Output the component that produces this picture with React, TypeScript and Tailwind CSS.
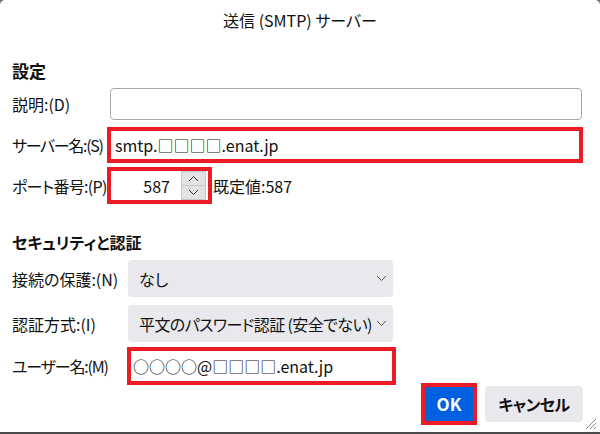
import React from 'react';

const font = "font-['Noto_Sans_CJK_JP',sans-serif] [font-feature-settings:'palt']";

const Chevron: React.FC<{ up?: boolean; className?: string; color?: string }> = ({ up, className, color }) => (
  <svg width="11" height="7" viewBox="0 0 11 7" className={className}>
    <path
      d={up ? 'M1 6L5.5 1.5L10 6' : 'M1 1L5.5 5.5L10 1'}
      fill="none"
      stroke={color ?? '#444'}
      strokeWidth="1"
    />
  </svg>
);

const Select: React.FC<{ value: string; tight?: boolean }> = ({ value, tight }) => (
  <div className="w-[265px] h-[37px] bg-[#e9e9ed] rounded-[4px] flex items-center pl-[11px] pr-[6px]">
    <span className={`flex-1 whitespace-nowrap overflow-hidden ${tight ? 'tracking-[-0.6px]' : ''}`}>{value}</span>
    <Chevron className="shrink-0" color="#555" />
  </div>
);

const Label: React.FC<{ w: string; tight?: string; children: React.ReactNode }> = ({ w, tight, children }) => (
  <span className={`${w} ${tight ?? ''} shrink-0 whitespace-nowrap`}>{children}</span>
);

const App: React.FC = () => {
  return (
    <div className="w-[600px] h-[434px] bg-[#6e6e6e]">
      <div
        className={`${font} w-[600px] h-[434px] bg-white rounded-t-[5px] border-b-2 border-[#4a4a4a] text-[16px] text-[#111] flex flex-col relative`}
      >
        <div className="h-[40px] flex items-center justify-center">送信 (SMTP) サーバー</div>

        <div className="px-[12px] flex flex-col">
          <div className="mt-[20px] h-[22px] leading-[22px] text-[17px] font-bold">設定</div>

          <div className="mt-[6px] h-[32px] flex items-center">
            <Label w="w-[95px]">説明:(D)</Label>
            <div className="ml-[3px] w-[472px] h-[32px] border border-[#a8a8a8] rounded-[4px]" />
          </div>

          <div className="mt-[7px] h-[36px] flex items-center">
            <Label w="w-[95px]" tight="tracking-[-1.3px]">サーバー名:(S)</Label>
            <div className="w-[476px] h-[36px] border-4 border-[#ec1c24] flex items-center pl-[4px] whitespace-nowrap">
              smtp.□□□□.enat.jp
            </div>
          </div>

          <div className="mt-[4px] h-[37px] flex items-center">
            <Label w="w-[95px]" tight="tracking-[-0.7px]">ポート番号:(P)</Label>
            <div className="w-[105px] h-[37px] border-4 border-[#ec1c24] flex">
              <div className="flex-1 flex items-center justify-end pr-[11px]">587</div>
              <div className="w-[25px] mr-[2px] flex flex-col bg-[#e3e3e3] border border-[#c8c8c8]">
                <div className="flex-1 flex items-center justify-center border-b border-[#c8c8c8]">
                  <Chevron up color="#333" />
                </div>
                <div className="flex-1 flex items-center justify-center">
                  <Chevron color="#333" />
                </div>
              </div>
            </div>
            <span className="ml-[1px] whitespace-nowrap">既定値:587</span>
          </div>

          <div className="mt-[27px] h-[22px] leading-[22px] text-[16px] font-bold">セキュリティと認証</div>

          <div className="mt-[7px] h-[37px] flex items-center">
            <Label w="w-[116px]">接続の保護:(N)</Label>
            <Select value="なし" />
          </div>

          <div className="mt-[8px] h-[37px] flex items-center">
            <Label w="w-[116px]">認証方式:(I)</Label>
            <Select value="平文のパスワード認証 (安全でない)" tight />
          </div>

          <div className="mt-[5px] h-[38px] flex items-center">
            <Label w="w-[115px]" tight="tracking-[-1.2px]">ユーザー名:(M)</Label>
            <div className="w-[269px] h-[38px] border-4 border-[#ec1c24] flex items-center pl-[2px] whitespace-nowrap">
              ○○○○@□□□□.enat.jp
            </div>
          </div>

          <div className="mt-[-2px] flex justify-end items-center pr-[5px]">
            <div className="w-[56px] h-[42px] border-4 border-[#ec1c24] flex">
              <div className="flex-1 bg-[#0061e0] text-white font-bold text-[17px] flex items-center justify-center">
                OK
              </div>
            </div>
            <div className="ml-[8px] w-[98px] h-[36px] bg-[#e9e9ed] rounded-[4px] font-bold tracking-[-0.5px] flex items-center justify-center">
              キャンセル
            </div>
          </div>
        </div>

        <svg width="12" height="12" viewBox="0 0 12 12" className="absolute right-[3px] bottom-[2px]">
          <path d="M11 1L1 11M11 5L5 11M11 9L9 11" stroke="#8a8a8a" strokeWidth="1" />
        </svg>
      </div>
    </div>
  );
};

export default App;
